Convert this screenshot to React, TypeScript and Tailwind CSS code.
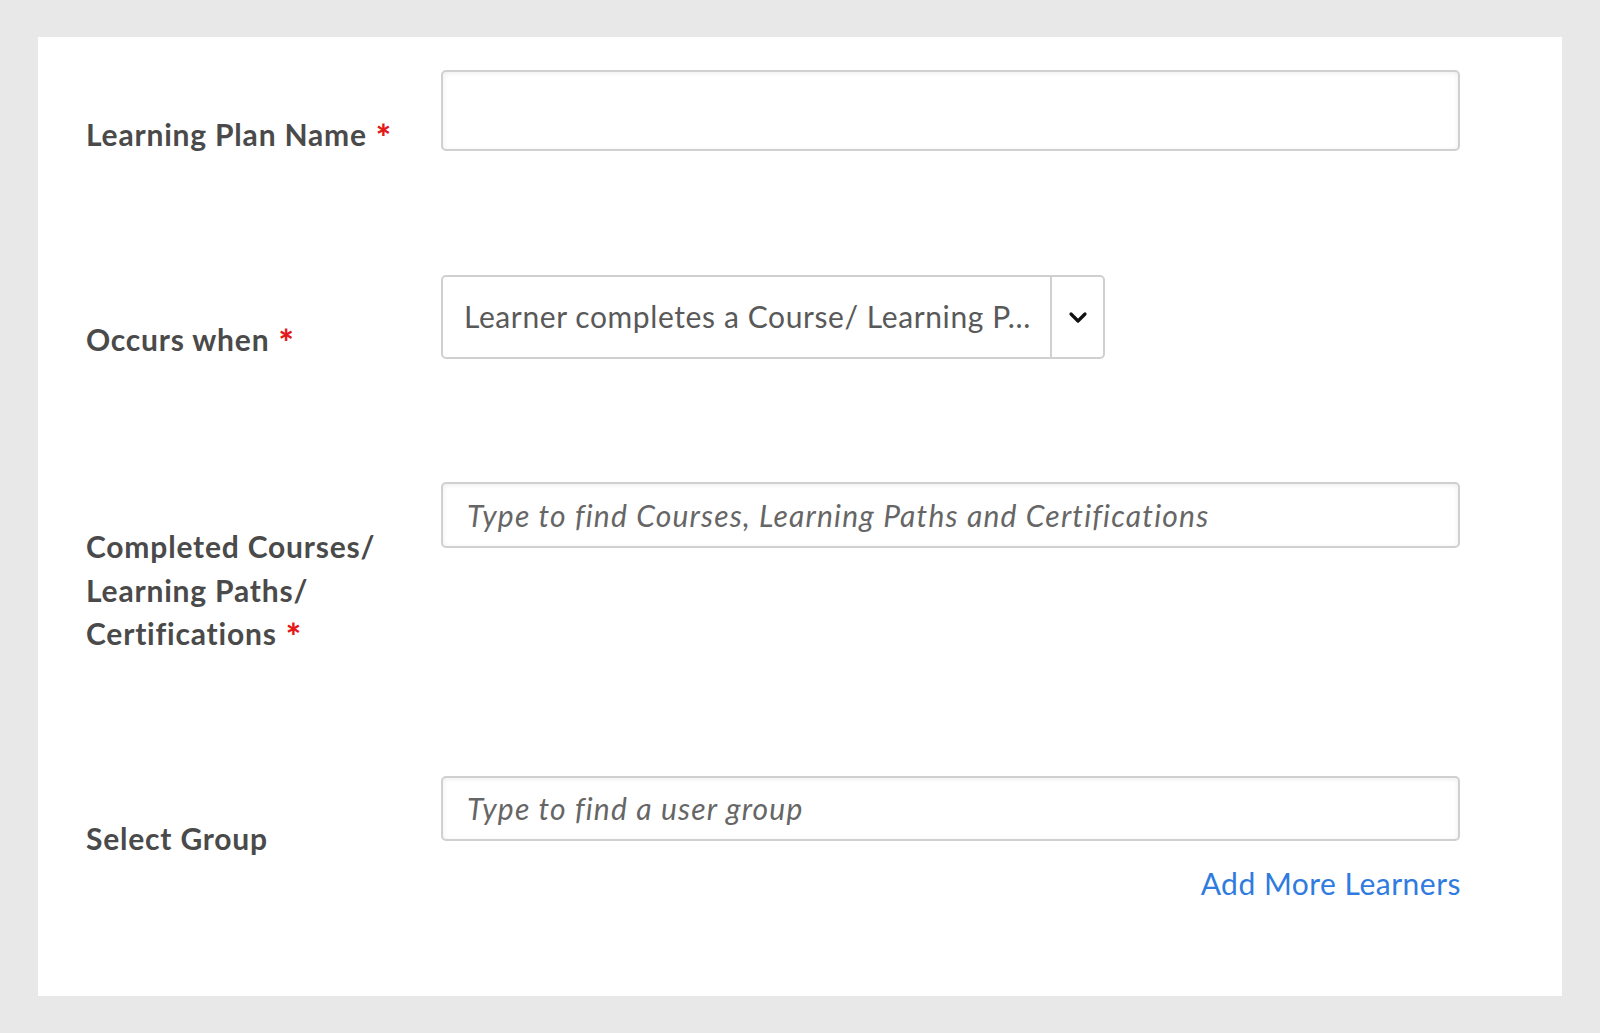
import React from "react";

const labelCls =
  "w-[355px] shrink-0 pt-[43px] text-[30px] leading-[43.5px] font-bold tracking-[0.8px] text-[#4a4a4a]";
const inputCls =
  "w-[1019px] border-2 border-[#d0d0d0] rounded-[5px] bg-white shadow-[inset_0_1px_5px_rgba(0,0,0,0.08)] flex items-center";

function Star() {
  return (
    <span className="text-[#e3191b] ml-[9px] text-[36px] font-black leading-none relative top-[5px]">
      *
    </span>
  );
}

export default function App() {
  return (
    <div
      className="w-[1600px] h-[1033px] bg-[#e8e8e8] pt-[37px] pl-[38px]"
      style={{ fontFamily: "Lato, 'Open Sans', sans-serif" }}
    >
      <div className="w-[1524px] h-[959px] bg-white pl-[48px] pt-[33px]">
        {/* Row 1 */}
        <div className="flex">
          <div className={labelCls}>
            Learning Plan Name
            <Star />
          </div>
          <div className={`${inputCls} h-[81px]`}></div>
        </div>

        {/* Row 2 */}
        <div className="flex mt-[118px]">
          <div className={labelCls}>
            Occurs when
            <Star />
          </div>
          <div className="w-[664px] h-[84px] border-2 border-[#d0d0d0] rounded-[5px] bg-white flex">
            <div className="flex-1 flex items-center pl-[21px] text-[30px] tracking-[0.6px] text-[#595959] whitespace-nowrap overflow-hidden">
              Learner completes a Course/ Learning P...
            </div>
            <div className="w-[53px] border-l-2 border-[#d0d0d0] flex items-center justify-center">
              <svg width="22" height="16" viewBox="0 0 22 16" fill="none">
                <path
                  d="M4 5 L11 12 L18 5"
                  stroke="#111"
                  strokeWidth="3.2"
                  strokeLinecap="round"
                  strokeLinejoin="round"
                />
              </svg>
            </div>
          </div>
        </div>

        {/* Row 3 */}
        <div className="flex mt-[121px] items-start">
          <div className={labelCls}>
            Completed Courses/
            <br />
            Learning Paths/
            <br />
            Certifications
            <Star />
          </div>
          <div className={`${inputCls} h-[66px] pl-[24px] text-[30px] italic tracking-[1.2px] text-[#666666]`}>
            Type to find Courses, Learning Paths and Certifications
          </div>
        </div>

        {/* Row 4 */}
        <div className="flex mt-[120px] items-start">
          <div className={`${labelCls} !pt-[41px]`}>Select Group</div>
          <div className="flex flex-col items-end">
            <div className={`${inputCls} h-[65px] pl-[24px] text-[30px] italic tracking-[1.2px] text-[#666666]`}>
              Type to find a user group
            </div>
            <div className="mt-[23px] text-[30px] leading-[38px] tracking-[0.5px] text-[#2f7be0] -mr-[1px]">
              Add More Learners
            </div>
          </div>
        </div>
      </div>
    </div>
  );
}
